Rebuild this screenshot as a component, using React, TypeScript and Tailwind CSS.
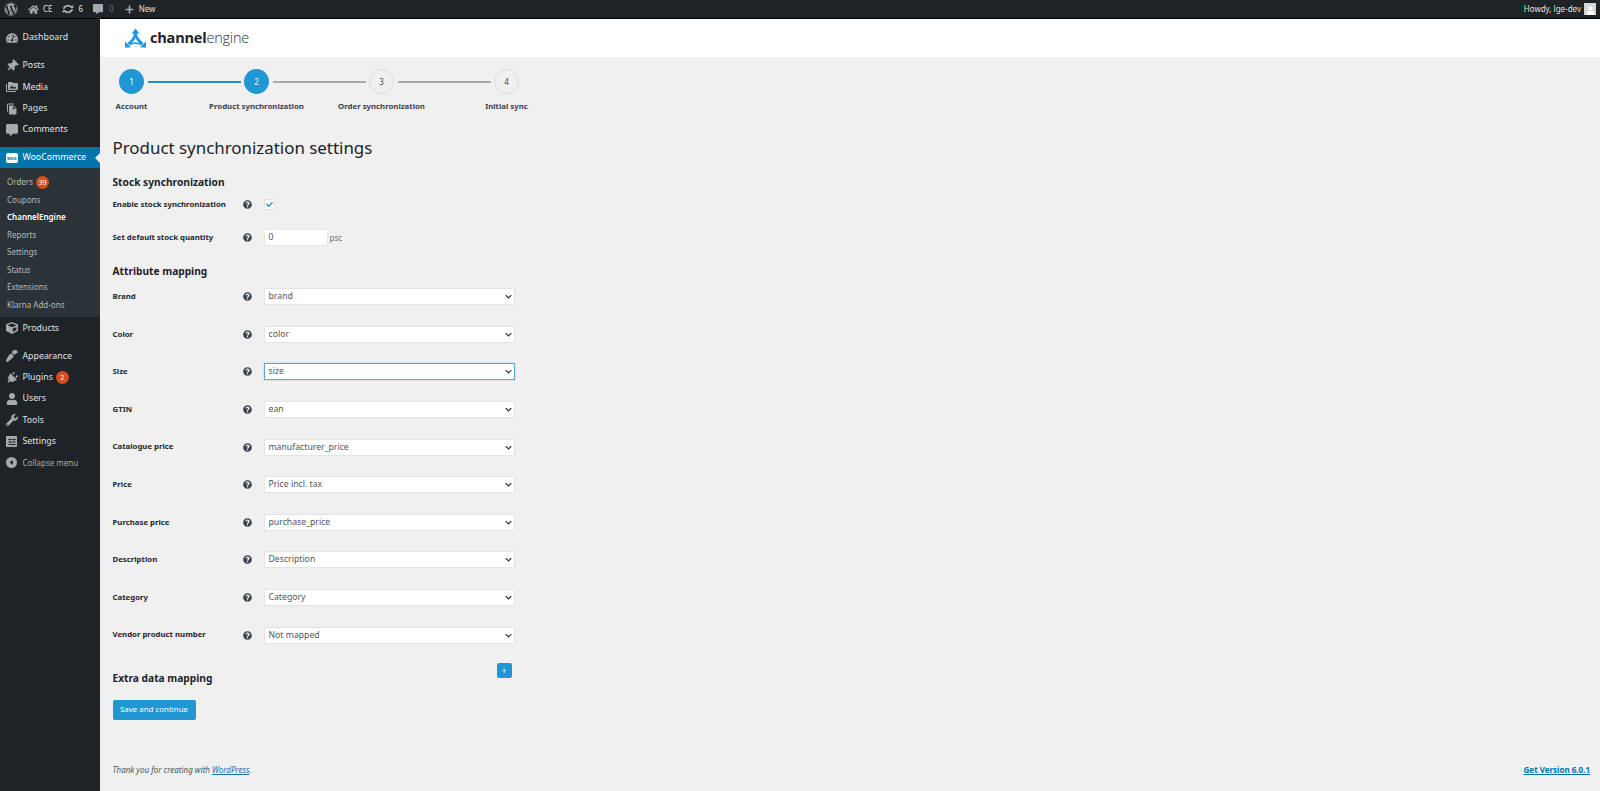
import React from "react";
import { FaWordpress, FaHome, FaPlus, FaTachometerAlt, FaThumbtack, FaCommentAlt, FaUser, FaWrench, FaQuestionCircle, FaPlug, FaPaintBrush, FaCube, FaCheck } from "react-icons/fa";
import { MdPermMedia, MdFileCopy, MdTune } from "react-icons/md";

const font = "font-['Noto_Sans',sans-serif]";

function Sync() {
  return (
    <svg viewBox="0 0 20 20" className="w-[12px] h-[12px] text-[#a7aaad]" fill="none" stroke="currentColor" strokeWidth="3">
      <path d="M3 10a7 6 0 0 1 13-2.500" />
      <path d="M17 10a7 6 0 0 1-13 2.500" />
      <path d="M13 8.500h6V3z" fill="currentColor" stroke="none" />
      <path d="M7 11.500H1V17z" fill="currentColor" stroke="none" />
    </svg>
  );
}

function Logo() {
  return (
    <svg viewBox="0 0 24 22" className="w-[21px] h-[20px] text-[#2496e8]" fill="none" stroke="currentColor" strokeWidth="3.200">
      <path d="M12 5c0 5-3 9-8 13" />
      <path d="M12 5c0 5 3 9 8 13" />
      <path d="M5 18.500q7-3.500 14 0" strokeWidth="2" />
      <path d="M12 0l4.500 6h-9z" fill="currentColor" stroke="none" />
      <path d="M0 15l7 6.500-7 .500z" fill="currentColor" stroke="none" />
      <path d="M24 15l-7 6.500 7 .500z" fill="currentColor" stroke="none" />
    </svg>
  );
}

function CollapseIcon() {
  return (
    <svg viewBox="0 0 20 20" className="w-[11px] h-[11px] text-[#a7aaad]" fill="currentColor">
      <path fillRule="evenodd" d="M10 0a10 10 0 1 1 0 20a10 10 0 0 1 0-20zM12.500 5.500L6.500 10l6 4.500z" />
    </svg>
  );
}

function SettingsIcon() {
  return (
    <span className="w-[11px] h-[11px] bg-[#a7aaad] rounded-[1px] flex items-center justify-center">
      <MdTune className="text-[#1d2327] w-[10px] h-[10px]" />
    </span>
  );
}

function Badge({ n }: { n: string }) {
  return (
    <span className="ml-[3px] w-[13px] h-[13px] rounded-full bg-[#d54e21] text-white text-[7px] leading-[13px] text-center inline-block">{n}</span>
  );
}

function MenuItem({ icon, label, badge, dim }: { icon: React.ReactNode; label: string; badge?: string; dim?: boolean }) {
  return (
    <div className={`h-[21.300px] flex items-center ${dim ? "text-[#a7aaad] text-[8px]" : "text-[#e0e2e4] text-[8.800px]"}`}>
      <span className="w-[22.500px] flex justify-center shrink-0 text-[#a7aaad] text-[12px] pl-[1px]">{icon}</span>
      <span>{label}</span>
      {badge && <Badge n={badge} />}
    </div>
  );
}

function SubItem({ label, badge, active }: { label: string; badge?: string; active?: boolean }) {
  return (
    <div className={`h-[17.500px] flex items-center pl-[7px] text-[8px] ${active ? "text-white font-semibold" : "text-[#b4b9be]"}`}>
      <span>{label}</span>
      {badge && <Badge n={badge} />}
    </div>
  );
}

function Sidebar() {
  return (
    <aside className="w-[100px] shrink-0 bg-[#1d2327] pt-[8px]">
      <MenuItem icon={<FaTachometerAlt />} label="Dashboard" />
      <div className="h-[7px]" />
      <MenuItem icon={<FaThumbtack className="rotate-45" />} label="Posts" />
      <MenuItem icon={<MdPermMedia />} label="Media" />
      <MenuItem icon={<MdFileCopy />} label="Pages" />
      <MenuItem icon={<FaCommentAlt />} label="Comments" />
      <div className="h-[7px]" />
      <div className="h-[21px] bg-[#0075ab] flex items-center text-white text-[8.800px] relative">
        <span className="w-[22.500px] flex justify-center shrink-0 pl-[1px]">
          <span className="w-[12px] h-[10px] bg-white rounded-[2px] text-[#0075ab] text-[4.500px] leading-[10px] text-center font-bold">woo</span>
        </span>
        <span>WooCommerce</span>
        <span className="absolute right-0 top-[6px] w-0 h-0 border-y-[5px] border-y-transparent border-r-[5px] border-r-[#f0f0f1]" />
      </div>
      <div className="bg-[#2c3338] pt-[5px] pb-[4px]">
        <SubItem label="Orders" badge="39" />
        <SubItem label="Coupons" />
        <SubItem label="ChannelEngine" active />
        <SubItem label="Reports" />
        <SubItem label="Settings" />
        <SubItem label="Status" />
        <SubItem label="Extensions" />
        <SubItem label="Klarna Add-ons" />
      </div>
      <MenuItem icon={<FaCube />} label="Products" />
      <div className="h-[7px]" />
      <MenuItem icon={<FaPaintBrush className="rotate-180" />} label="Appearance" />
      <MenuItem icon={<FaPlug className="rotate-45" />} label="Plugins" badge="2" />
      <MenuItem icon={<FaUser />} label="Users" />
      <MenuItem icon={<FaWrench />} label="Tools" />
      <MenuItem icon={<SettingsIcon />} label="Settings" />
      <MenuItem icon={<CollapseIcon />} label="Collapse menu" dim />
    </aside>
  );
}

function TopBar() {
  return (
    <header className="h-[19px] bg-[#1d2327] border-b border-b-black flex items-center justify-between text-[8px] text-[#e0e2e4] shrink-0">
      <div className="flex items-center">
        <FaWordpress className="ml-[4px] w-[14px] h-[14px] text-[#a7aaad]" />
        <FaHome className="ml-[10px] w-[11px] h-[11px] text-[#a7aaad]" />
        <span className="ml-[4px]">CE</span>
        <span className="ml-[9px]"><Sync /></span>
        <span className="ml-[5px]">6</span>
        <FaCommentAlt className="ml-[10px] w-[10px] h-[10px] text-[#a7aaad]" />
        <span className="ml-[6px] text-[#6b7075]">0</span>
        <FaPlus className="ml-[11px] w-[9px] h-[9px] text-[#a7aaad]" />
        <span className="ml-[5px]">New</span>
      </div>
      <div className="flex items-center pr-[4px]">
        <span>Howdy, lge-dev</span>
        <span className="ml-[3px] w-[12px] h-[12px] bg-[#d5d5d5] flex items-end justify-center overflow-hidden">
          <FaUser className="w-[9px] h-[9px] text-white" />
        </span>
      </div>
    </header>
  );
}

function Step({ n, label, done, last }: { n: number; label: string; done: boolean; last?: boolean }) {
  return (
    <div className="w-[125px] shrink-0 flex flex-col items-center relative">
      <span className={`w-[25px] h-[25px] rounded-full flex items-center justify-center text-[8px] ${done ? "bg-[#2096d3] text-white" : "bg-[#f0f0f1] border border-[#dcdcdc] text-[#444]"}`}>{n}</span>
      <span className="mt-[7px] text-[7.800px] font-bold text-[#3c434a] whitespace-nowrap leading-[11px]">{label}</span>
      {!last && <span className={`absolute left-[79px] top-[11.500px] w-[93px] h-[2.500px] ${n === 1 ? "bg-[#1b8fd0]" : "bg-[#a9a9a9]"}`} />}
    </div>
  );
}

function Help() {
  return <FaQuestionCircle className="w-[9px] h-[9px] text-[#3c434a]" />;
}

function Row({ label, value, focus }: { label: string; value: string; focus?: boolean }) {
  return (
    <div className="h-[37.600px] flex items-center">
      <span className="w-[130px] text-[7.800px] font-bold text-[#23282d]">{label}</span>
      <span className="w-[21.500px] flex justify-start pl-[0.500px]"><Help /></span>
      <div className={`w-[250.500px] h-[17px] bg-white flex items-center justify-between pl-[3.500px] pr-[2px] border text-[8.700px] text-[#50575e] ${focus ? "border-[#5ba8dc] shadow-[0_0_1px_#5ba8dc]" : "border-[#e4e4e4]"}`}>
        <span>{value}</span>
        <svg viewBox="0 0 10 6" className="w-[7px] h-[5px] text-[#2c3338]" fill="none" stroke="currentColor" strokeWidth="1.800">
          <path d="M1 1l4 4 4-4" />
        </svg>
      </div>
    </div>
  );
}

const rows = [
  ["Brand", "brand"],
  ["Color", "color"],
  ["Size", "size"],
  ["GTIN", "ean"],
  ["Catalogue price", "manufacturer_price"],
  ["Price", "Price incl. tax"],
  ["Purchase price", "purchase_price"],
  ["Description", "Description"],
  ["Category", "Category"],
  ["Vendor product number", "Not mapped"],
];

export default function App() {
  return (
    <div className={`h-[791px] w-[1600px] flex flex-col overflow-hidden bg-[#f0f0f1] ${font}`}>
      <TopBar />
      <div className="flex flex-1 min-h-0">
        <Sidebar />
        <main className="flex-1 flex flex-col min-w-0">
          <div className="h-[38px] bg-white flex items-center pl-[25px] shrink-0">
            <Logo />
            <span className="ml-[4px] text-[14.500px] text-[#1d2327] font-['Open_Sans',sans-serif] tracking-[-0.2px]">
              <span className="font-bold">channel</span>
              <span className="font-light text-[#333]">engine</span>
            </span>
          </div>
          <div className="flex ml-[-31px] mt-[12px] shrink-0">
            <Step n={1} label="Account" done />
            <Step n={2} label="Product synchronization" done />
            <Step n={3} label="Order synchronization" done={false} />
            <Step n={4} label="Initial sync" done={false} last />
          </div>
          <div className="pl-[12.500px] flex-1 flex flex-col">
            <h1 className="mt-[24px] text-[16.900px] leading-[24px] text-[#1d2327] whitespace-nowrap">Product synchronization settings</h1>
            <h2 className="mt-[15px] text-[10.200px] leading-[14px] font-bold text-[#1d2327]">Stock synchronization</h2>
            <div className="h-[17px] mt-[7px] flex items-center">
              <span className="w-[130px] text-[7.800px] font-bold text-[#23282d]">Enable stock synchronization</span>
              <span className="w-[21.500px] pl-[0.500px]"><Help /></span>
              <span className="w-[11px] h-[11px] bg-white border border-[#e0e0e0] flex items-center justify-center">
                <FaCheck className="w-[7px] h-[7px] text-[#2096d3]" />
              </span>
            </div>
            <div className="h-[17px] mt-[16px] flex items-center">
              <span className="w-[130px] text-[7.800px] font-bold text-[#23282d]">Set default stock quantity</span>
              <span className="w-[21.500px] pl-[0.500px]"><Help /></span>
              <span className="w-[63.500px] h-[17px] bg-white border border-[#e8e8e8] pl-[3.500px] text-[8.700px] leading-[15px] text-[#50575e]">0</span>
              <span className="ml-[2px] text-[8px] text-[#6b7075]">psc</span>
            </div>
            <h2 className="mt-[18px] text-[10.200px] leading-[14px] font-bold text-[#1d2327]">Attribute mapping</h2>
            <div>
              {rows.map(([l, v]) => (
                <Row key={l} label={l} value={v} focus={l === "Size"} />
              ))}
            </div>
            <div className="relative mt-[12px] h-[19px] flex items-end w-[402px]">
              <h2 className="text-[10.200px] leading-[14px] font-bold text-[#1d2327]">Extra data mapping</h2>
              <span className="absolute right-[3px] top-[-3px] w-[15px] h-[15.500px] bg-[#2096d3] rounded-[2px] text-white text-[8px] leading-[15px] text-center">+</span>
            </div>
            <button className="mt-[15px] w-[83px] h-[20px] bg-[#2096d3] rounded-[2px] text-white text-[7.900px]">Save and continue</button>
            <div className="mt-auto mb-[15px] flex justify-between items-center pr-[10px] text-[8px]">
              <span className="italic text-[#50575e]">Thank you for creating with <span className="underline text-[#2271b1]">WordPress</span>.</span>
              <span className="underline font-bold text-[#0075ab]">Get Version 6.0.1</span>
            </div>
          </div>
        </main>
      </div>
    </div>
  );
}
